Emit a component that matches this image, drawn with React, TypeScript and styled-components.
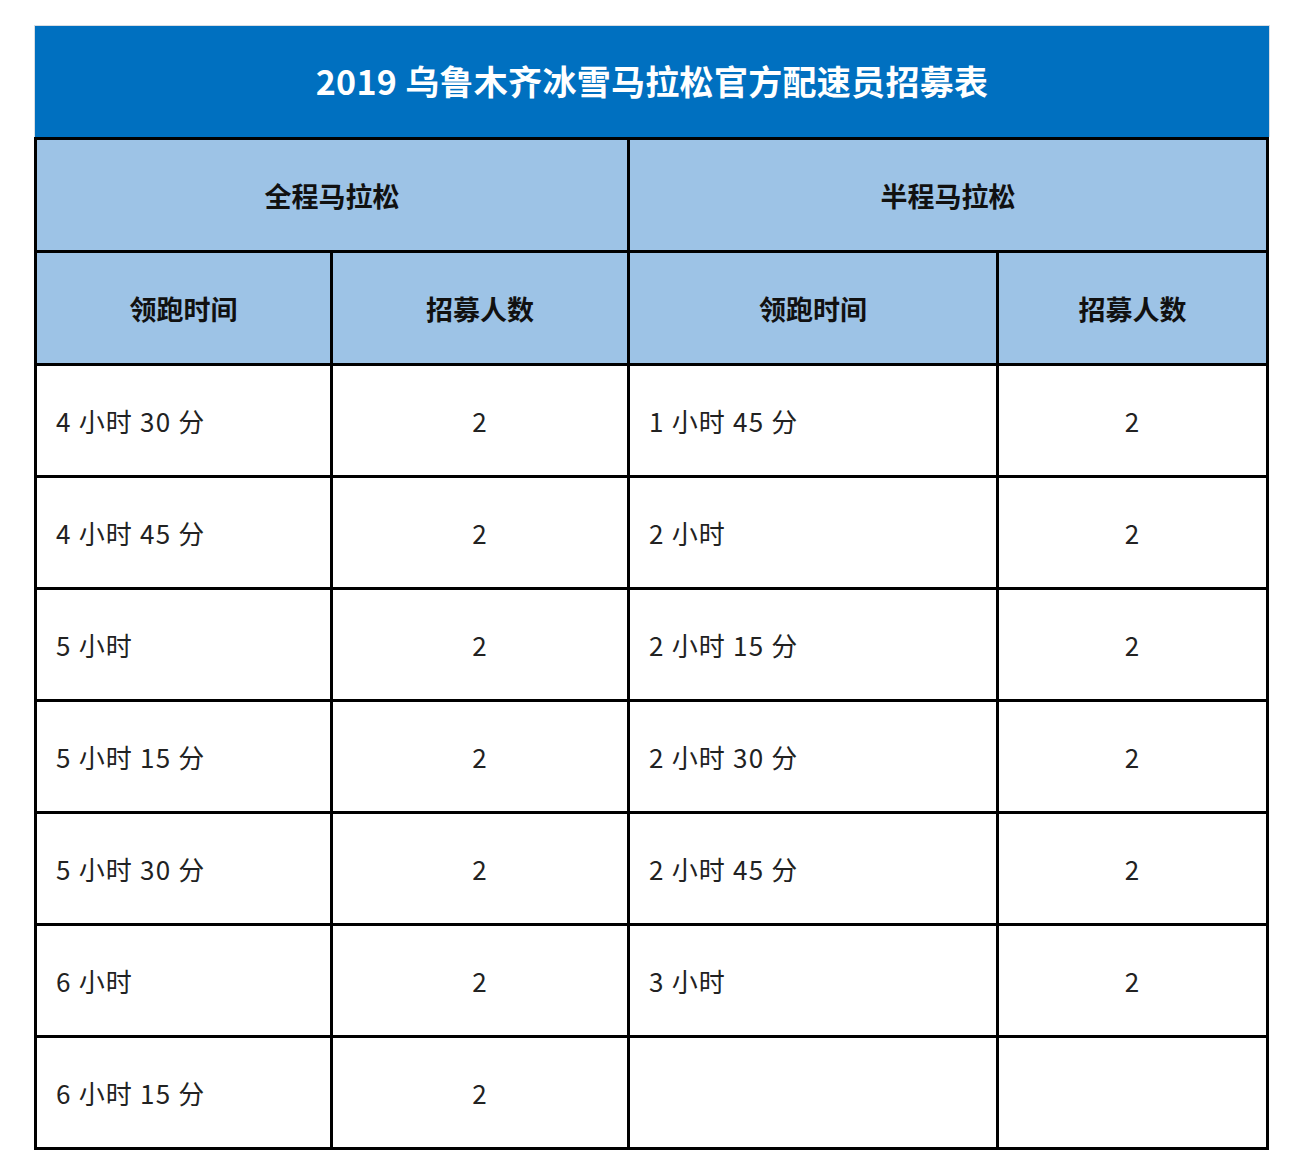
import styled, { createGlobalStyle } from "styled-components";

const GlobalStyle = createGlobalStyle`
  html, body {
    margin: 0;
    padding: 0;
    background: #ffffff;
  }
  body {
    font-family: "Noto Sans CJK SC", "Noto Sans", sans-serif;
  }
`;

const Page = styled.div`
  padding: 25px 0 0 34px;
`;

const Sheet = styled.div`
  width: 1236px;
`;

const TitleBar = styled.div`
  height: 112px;
  box-sizing: border-box;
  background: #0070c0;
  border: 1px solid #d8dde3;
  border-bottom: none;
  display: flex;
  align-items: center;
  justify-content: center;
  color: #ffffff;
  font-size: 34px;
  font-weight: 700;
  letter-spacing: 0.3px;
  padding-bottom: 2px;
`;

const Grid = styled.div`
  display: grid;
  grid-template-columns: 293px 294px 366px 267px;
  grid-template-rows: 110px 110px;
  grid-auto-rows: 109px;
  gap: 3px;
  padding: 3px;
  width: 1235px;
  box-sizing: border-box;
  background: #000000;
`;

const HeadCell = styled.div<{ $span?: number }>`
  grid-column: span ${(p) => p.$span ?? 1};
  background: #9dc3e6;
  display: flex;
  align-items: center;
  justify-content: center;
  font-size: 27px;
  font-weight: 700;
  color: #111111;
`;

const Cell = styled.div<{ $center?: boolean }>`
  background: #ffffff;
  display: flex;
  align-items: center;
  justify-content: ${(p) => (p.$center ? "center" : "flex-start")};
  padding-left: ${(p) => (p.$center ? "0" : "19px")};
  font-size: 26px;
  color: #222222;
  letter-spacing: 1.2px;
`;

const rows: [string, string, string, string][] = [
  ["4 小时 30 分", "2", "1 小时 45 分", "2"],
  ["4 小时 45 分", "2", "2 小时", "2"],
  ["5 小时", "2", "2 小时 15 分", "2"],
  ["5 小时 15 分", "2", "2 小时 30 分", "2"],
  ["5 小时 30 分", "2", "2 小时 45 分", "2"],
  ["6 小时", "2", "3 小时", "2"],
  ["6 小时 15 分", "2", "", ""],
];

export default function App() {
  return (
    <>
      <GlobalStyle />
      <Page>
        <Sheet>
          <TitleBar>2019 乌鲁木齐冰雪马拉松官方配速员招募表</TitleBar>
          <Grid>
            <HeadCell $span={2}>全程马拉松</HeadCell>
            <HeadCell $span={2}>半程马拉松</HeadCell>
            <HeadCell>领跑时间</HeadCell>
            <HeadCell>招募人数</HeadCell>
            <HeadCell>领跑时间</HeadCell>
            <HeadCell>招募人数</HeadCell>
            {rows.flatMap((r, i) => [
              <Cell key={`a${i}`}>{r[0]}</Cell>,
              <Cell key={`b${i}`} $center>
                {r[1]}
              </Cell>,
              <Cell key={`c${i}`}>{r[2]}</Cell>,
              <Cell key={`d${i}`} $center>
                {r[3]}
              </Cell>,
            ])}
          </Grid>
        </Sheet>
      </Page>
    </>
  );
}
